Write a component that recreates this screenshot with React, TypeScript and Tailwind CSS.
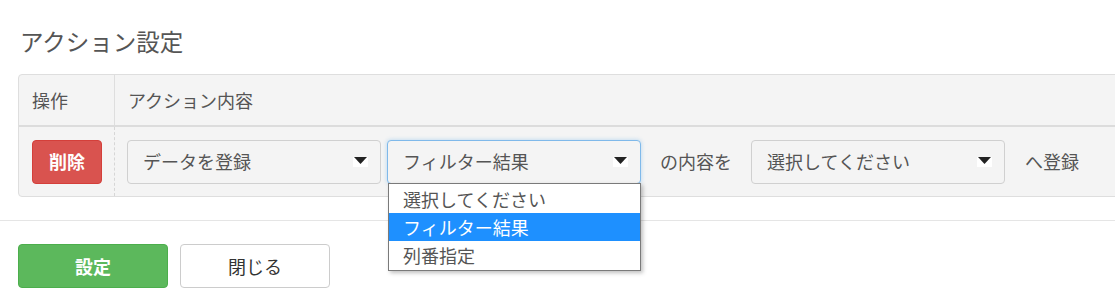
import React from "react";

const Caret = () => (
    <span className="flex items-start justify-center w-[15px] h-[10px] bg-white">
        <svg width="13" height="7" viewBox="0 0 13 7">
            <path d="M0 0 H13 L6.5 7 Z" fill="#222" />
        </svg>
    </span>
);

const Select = ({ label, focused }: { label: string; focused?: boolean }) => (
    <div
        className={`flex items-center justify-between w-[254px] h-[44px] pl-[15px] pr-[12px] rounded-[4px] bg-[#f4f4f4] border ${
            focused
                ? "border-[#7fb9ea] shadow-[0_0_4px_rgba(102,175,233,0.45)]"
                : "border-[#d0d0d0]"
        }`}
    >
        <span>{label}</span>
        <Caret />
    </div>
);

export default function App() {
    const options = ["選択してください", "フィルター結果", "列番指定"];

    return (
        <div className="relative w-[1115px] h-[298px] overflow-hidden bg-white text-[#555] text-[18px] font-['Noto_Sans_CJK_JP',sans-serif]">
            <h2 className="pl-[20px] pt-[26px] text-[23.5px] leading-[30px]">アクション設定</h2>

            {/* table */}
            <div className="ml-[18px] mt-[18px] w-[1130px] border border-[#dedede] rounded-l-[4px] bg-[#f4f4f4]">
                <div className="flex h-[52px] border-b-2 border-[#dcdcdc]">
                    <div className="w-[96px] flex items-center pl-[13px] border-r border-[#dedede]">操作</div>
                    <div className="flex items-center pl-[13px]">アクション内容</div>
                </div>
                <div className="flex h-[69px]">
                    <div className="w-[96px] flex items-center pl-[13px] border-r border-dashed border-[#d6d6d6]">
                        <button className="w-[70px] h-[44px] rounded-[4px] bg-[#d9534f] border border-[#d43f3a] text-white font-bold">
                            削除
                        </button>
                    </div>
                    <div className="flex items-center pl-[12px]">
                        <Select label="データを登録" />
                        <div className="ml-[6px]">
                            <Select label="フィルター結果" focused />
                        </div>
                        <span className="ml-[19px]">の内容を</span>
                        <div className="ml-[19px]">
                            <Select label="選択してください" />
                        </div>
                        <span className="ml-[20px]">へ登録</span>
                    </div>
                </div>
            </div>

            <div className="mt-[23px] border-t border-[#e5e5e5]" />

            <div className="flex gap-[12px] ml-[18px] mt-[23px]">
                <button className="w-[150px] h-[44px] rounded-[4px] bg-[#5cb85c] border border-[#4cae4c] text-white font-bold">
                    設定
                </button>
                <button className="w-[150px] h-[44px] rounded-[4px] bg-white border border-[#ccc] text-[#333]">
                    閉じる
                </button>
            </div>

            {/* open dropdown list */}
            <ul className="absolute left-[388px] top-[183px] w-[253px] bg-white border border-[#7a7a7a] shadow-[2px_2px_4px_rgba(0,0,0,0.25)] py-px">
                {options.map((o, i) => (
                    <li
                        key={o}
                        className={`h-[28px] leading-[28px] pl-[14px] ${
                            i === 1 ? "bg-[#1e90ff] text-white" : "text-[#555]"
                        }`}
                    >
                        {o}
                    </li>
                ))}
            </ul>
        </div>
    );
}
